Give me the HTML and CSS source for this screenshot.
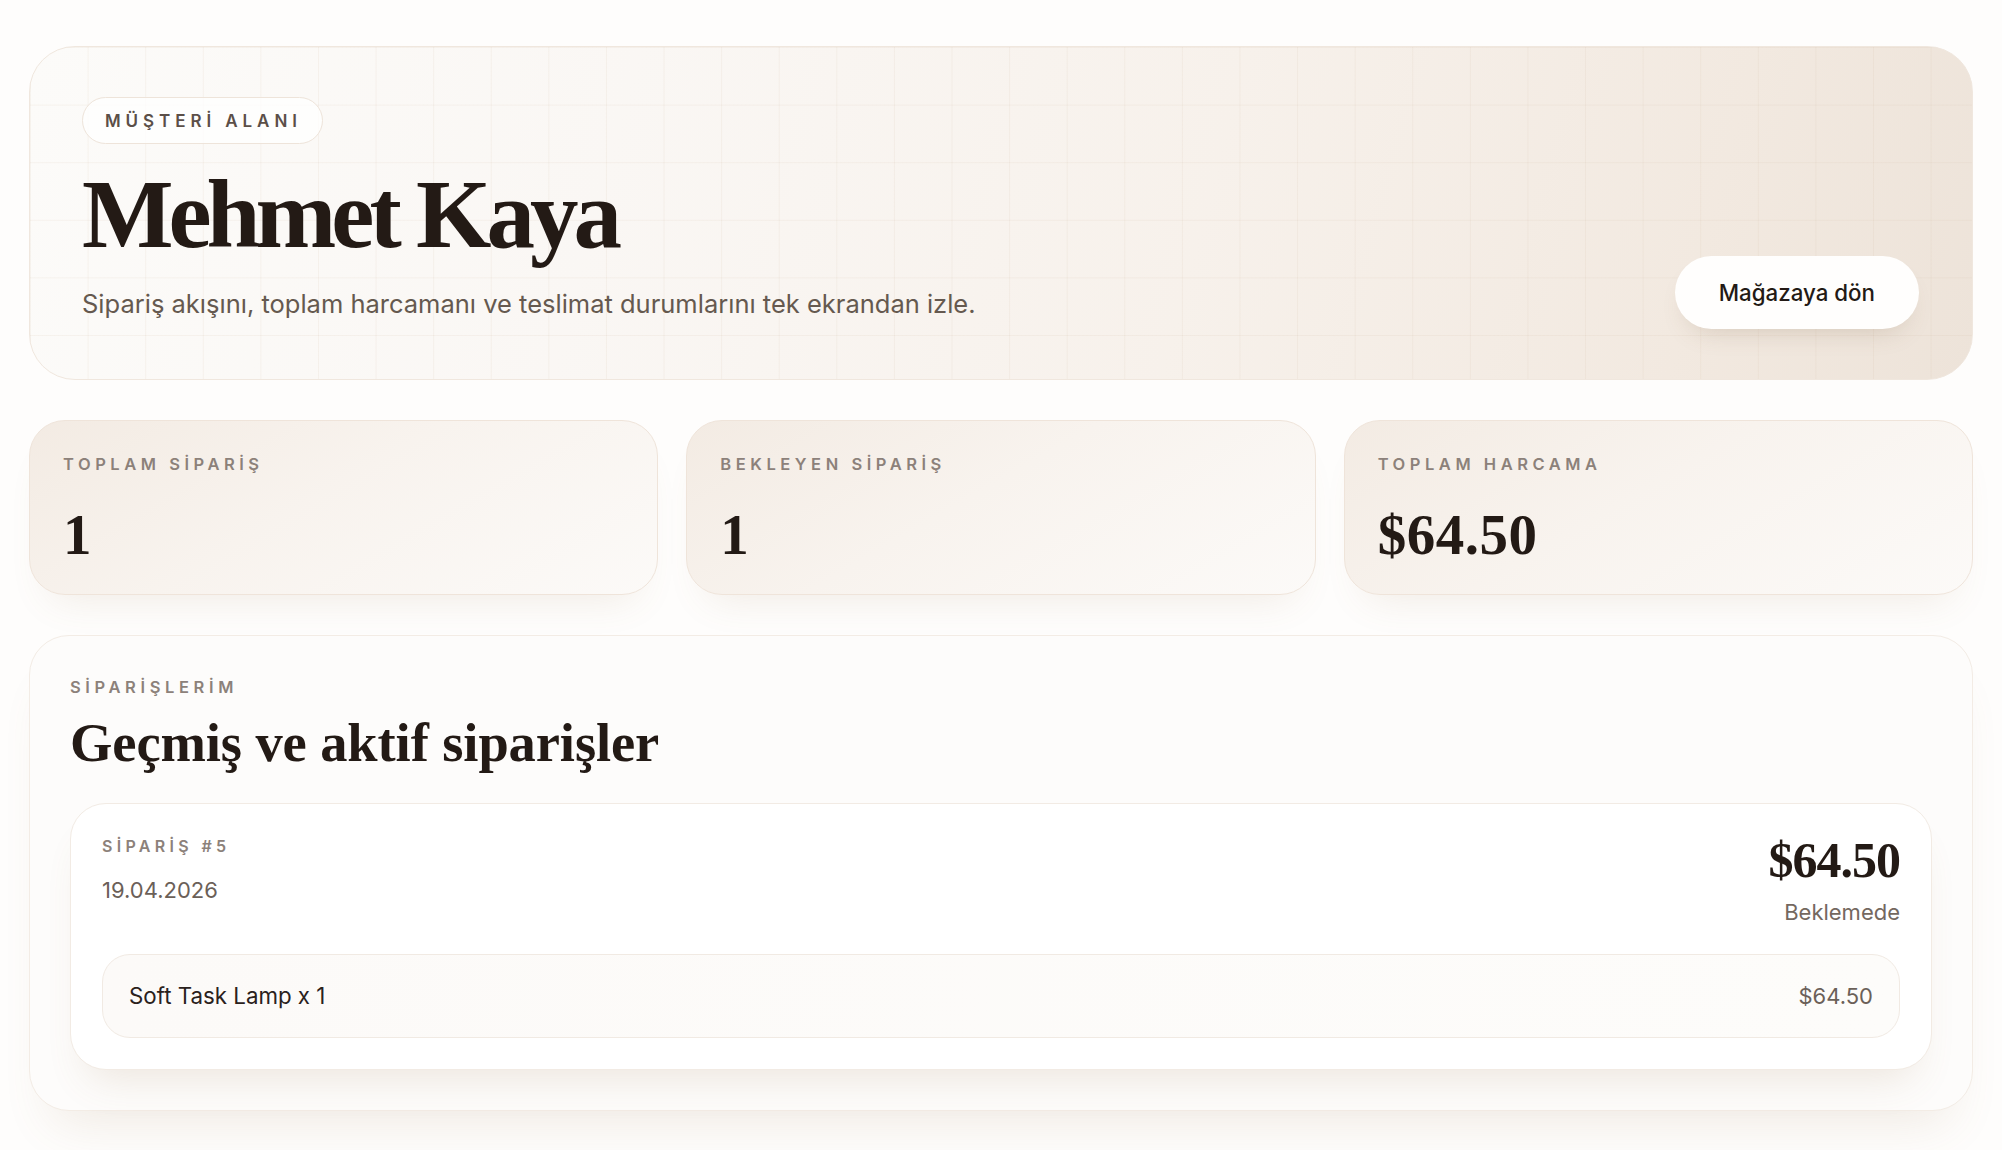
FILE: index.html
```html
<!DOCTYPE html>
<html lang="tr">
<head>
<meta charset="utf-8">
<title>Müşteri Alanı</title>
<link rel="stylesheet" href="styles.css">
</head>
<body>
<main class="page">
  <section class="hero">
    <div class="hero-text">
      <span class="eyebrow-pill">MÜŞTERİ ALANI</span>
      <h1 class="hero-title">Mehmet Kaya</h1>
      <p class="hero-sub">Sipariş akışını, toplam harcamanı ve teslimat durumlarını tek ekrandan izle.</p>
    </div>
    <a class="btn-store" href="#">Mağazaya dön</a>
  </section>

  <section class="stats">
    <div class="stat-card">
      <p class="label">TOPLAM SİPARİŞ</p>
      <p class="stat-value">1</p>
    </div>
    <div class="stat-card">
      <p class="label">BEKLEYEN SİPARİŞ</p>
      <p class="stat-value">1</p>
    </div>
    <div class="stat-card">
      <p class="label">TOPLAM HARCAMA</p>
      <p class="stat-value">$64.50</p>
    </div>
  </section>

  <section class="orders">
    <p class="label section-label">SİPARİŞLERİM</p>
    <h2 class="section-title">Geçmiş ve aktif siparişler</h2>
    <article class="order-card">
      <div class="order-head">
        <div class="order-meta">
          <p class="label">SİPARİŞ #5</p>
          <p class="order-date">19.04.2026</p>
        </div>
        <div class="order-total">
          <p class="order-price">$64.50</p>
          <p class="order-status">Beklemede</p>
        </div>
      </div>
      <div class="order-item">
        <span class="item-name">Soft Task Lamp x 1</span>
        <span class="item-price">$64.50</span>
      </div>
    </article>
  </section>
</main>
</body>
</html>
```

FILE: styles.css
```css
* {
  box-sizing: border-box;
}

html, body {
  margin: 0;
  padding: 0;
}

body {
  background: #fefdfc;
  font-family: "Inter", "Noto Sans", "Liberation Sans", sans-serif;
  color: #241b16;
}

p, h1, h2 {
  margin: 0;
}

.page {
  padding: 46px 29px 40px;
  display: flex;
  flex-direction: column;
  gap: 40px;
}

/* ---------- hero ---------- */
.hero {
  display: flex;
  justify-content: space-between;
  align-items: flex-end;
  padding: 50px 53px 50px 52px;
  border: 1px solid #f0e7de;
  border-radius: 46px;
  background:
    linear-gradient(to right, rgba(205, 180, 155, 0.12) 1px, transparent 1px),
    linear-gradient(to bottom, rgba(205, 180, 155, 0.12) 1px, transparent 1px),
    linear-gradient(105deg, #fcfbf9 0%, #faf7f4 30%, #f7f1eb 60%, #f2e9e0 85%, #ede3d9 100%);
  background-size: 57.6px 57.6px, 57.6px 57.6px, 100% 100%;
  background-position: 0 0, 0 0, 0 0;
}

.hero-text {
  display: flex;
  flex-direction: column;
  align-items: flex-start;
}

.eyebrow-pill {
  display: inline-flex;
  align-items: center;
  height: 47px;
  padding: 0 20px 0 22px;
  border: 1px solid #eee4da;
  border-radius: 999px;
  background: rgba(255, 255, 255, 0.75);
  font-size: 17px;
  font-weight: 600;
  letter-spacing: 0.29em;
  color: #5b4f48;
}

.hero-title {
  margin-top: 22px;
  font-family: "Liberation Serif", "Times New Roman", serif;
  font-weight: 700;
  font-size: 97px;
  line-height: 1;
  letter-spacing: -5px;
  color: #231a15;
}

.hero-sub {
  margin: 22px 0 6px;
  font-size: 25.5px;
  line-height: 1.5;
  color: #65594f;
}

.btn-store {
  display: inline-flex;
  align-items: center;
  height: 73px;
  padding: 0 44px;
  border-radius: 999px;
  background: #fffefd;
  box-shadow: 0 14px 26px -14px rgba(120, 90, 60, 0.25);
  font-size: 22.3px;
  font-weight: 500;
  color: #231a15;
  text-decoration: none;
}

/* ---------- stats ---------- */
.stats {
  display: grid;
  grid-template-columns: repeat(3, 1fr);
  gap: 28px;
}

.stat-card {
  padding: 33px 33px 31px;
  border: 1px solid #efe4da;
  border-radius: 36px;
  background: linear-gradient(150deg, #f3ebe3 0%, #f8f3ee 45%, #fcfaf8 100%);
  box-shadow: 0 24px 40px -22px rgba(150, 110, 70, 0.14);
}

.label {
  font-size: 16px;
  font-weight: 600;
  line-height: 22px;
  letter-spacing: 0.27em;
  color: #8c817a;
}

.stat-card .label {
  font-size: 16.5px;
  line-height: 21px;
  letter-spacing: 0.275em;
}

.section-label {
  font-size: 16.5px;
  letter-spacing: 0.28em;
}

.stat-value {
  margin-top: 31px;
  font-family: "Liberation Serif", "Times New Roman", serif;
  font-weight: 700;
  font-size: 57px;
  line-height: 1;
  letter-spacing: 0.5px;
  color: #231a15;
}

/* ---------- orders ---------- */
.orders {
  padding: 40px;
  border: 1px solid #f3ece5;
  border-radius: 40px;
  background: #fdfcfb;
  box-shadow: 0 34px 50px -24px rgba(150, 110, 70, 0.14);
}

.section-title {
  margin: 15px 0 30px;
  font-family: "Liberation Serif", "Times New Roman", serif;
  font-weight: 700;
  font-size: 54.5px;
  line-height: 1.09;
  letter-spacing: -0.1px;
  color: #231a15;
}

.order-card {
  padding: 31px;
  border: 1px solid #f2ebe4;
  border-radius: 36px;
  background: #ffffff;
  box-shadow: 0 26px 40px -18px rgba(150, 110, 70, 0.16);
}

.order-head {
  display: flex;
  justify-content: space-between;
  align-items: flex-start;
}

.order-date {
  margin-top: 18px;
  font-size: 22px;
  line-height: 30px;
  color: #6b6058;
}

.order-total {
  display: flex;
  flex-direction: column;
  align-items: flex-end;
}

.order-price {
  font-family: "Liberation Serif", "Times New Roman", serif;
  font-weight: 700;
  font-size: 50px;
  line-height: 1;
  letter-spacing: -1px;
  color: #231a15;
}

.order-status {
  margin-top: 12px;
  font-size: 22px;
  line-height: 30px;
  color: #74685f;
}

.order-item {
  margin-top: 27px;
  display: flex;
  justify-content: space-between;
  align-items: center;
  padding: 26px 26px;
  border: 1px solid #f1eae3;
  border-radius: 28px;
  background: linear-gradient(90deg, #fcfaf8 0%, #fdfcfa 100%);
}

.item-name {
  font-size: 22.3px;
  line-height: 30px;
  color: #2a211c;
}

.item-price {
  font-size: 22px;
  line-height: 30px;
  color: #6b6058;
}
```
